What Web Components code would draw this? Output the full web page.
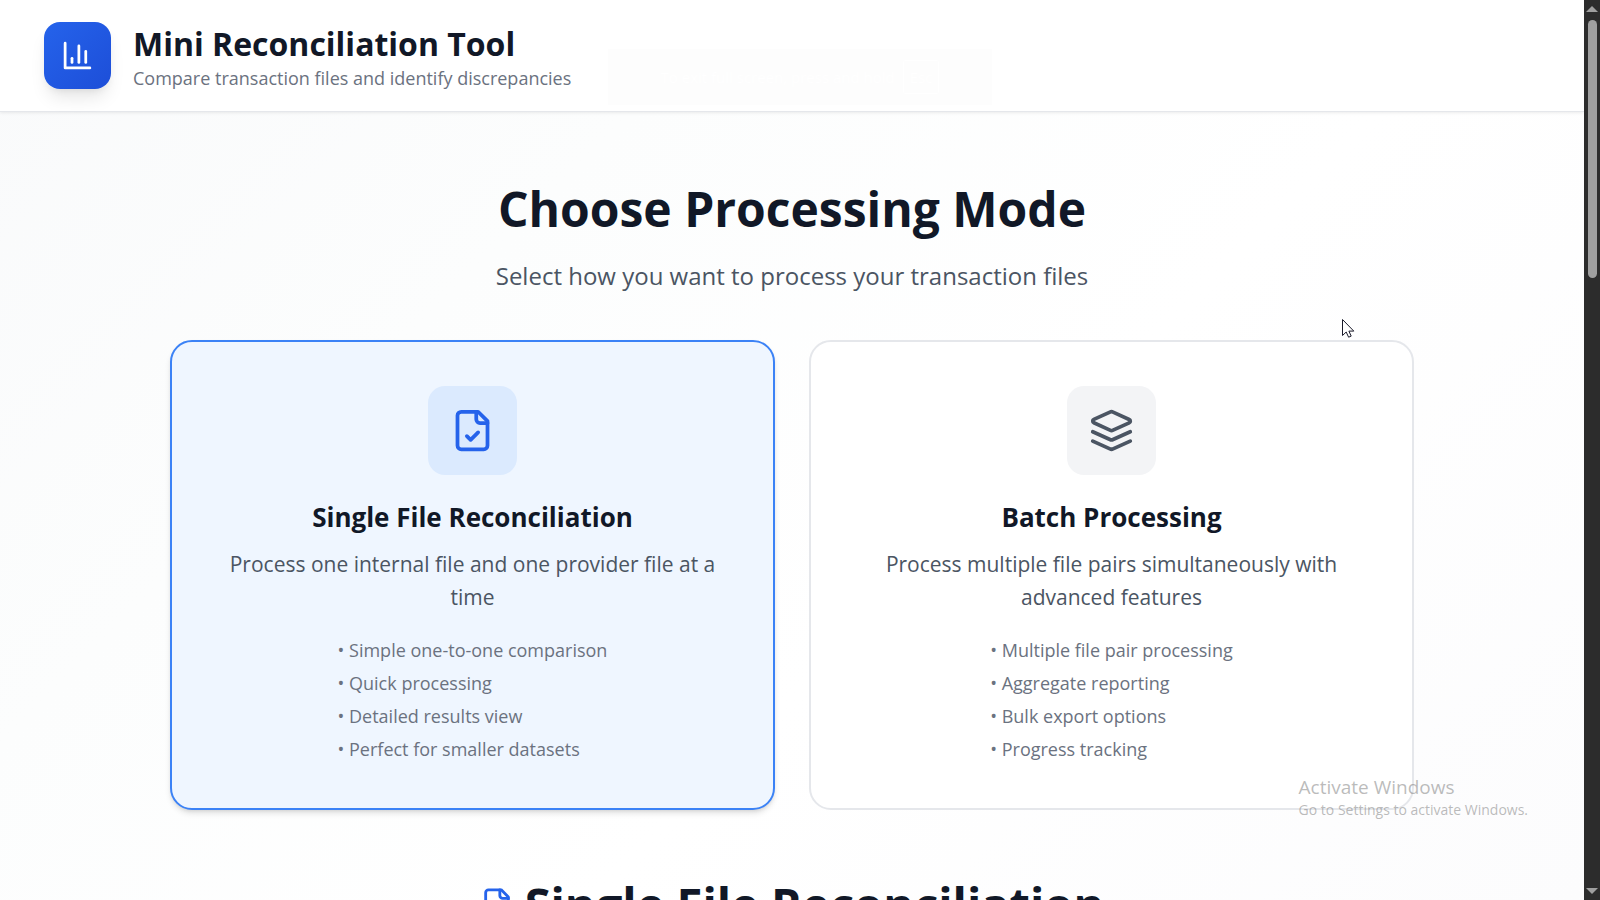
<!DOCTYPE html>
<html lang="en">
<head>
<meta charset="utf-8">
<meta name="viewport" content="width=device-width, initial-scale=1">
<title>Mini Reconciliation Tool</title>
<style>
  body { margin: 0; font-family: "Open Sans", "Noto Sans", sans-serif; color: #111827; }
</style>
</head>
<body>
<recon-window>
  <recon-header slot="header">
    <span slot="title">Mini Reconciliation Tool</span>
    <span slot="subtitle">Compare transaction files and identify discrepancies</span>
  </recon-header>
  <mode-picker>
    <span slot="title">Choose Processing Mode</span>
    <span slot="subtitle">Select how you want to process your transaction files</span>
    <mode-card icon="file" selected>
      <span slot="title">Single File Reconciliation</span>
      <span slot="text">Process one internal file and one provider file at a time</span>
      <span>• Simple one-to-one comparison</span>
      <span>• Quick processing</span>
      <span>• Detailed results view</span>
      <span>• Perfect for smaller datasets</span>
    </mode-card>
    <mode-card icon="layers">
      <span slot="title">Batch Processing</span>
      <span slot="text">Process multiple file pairs simultaneously with advanced features</span>
      <span>• Multiple file pair processing</span>
      <span>• Aggregate reporting</span>
      <span>• Bulk export options</span>
      <span>• Progress tracking</span>
    </mode-card>
  </mode-picker>
  <section-heading icon="file">Single File Reconciliation</section-heading>
  <screen-hint slot="overlay">To exit full screen, press and hold<span slot="key">Esc</span></screen-hint>
  <activation-note slot="overlay">
    <span slot="title">Activate Windows</span>
    Go to Settings to activate Windows.
  </activation-note>
  <pointer-arrow slot="overlay"></pointer-arrow>
</recon-window>

<script>
const ICONS = {
  chart: '<path d="M3 3v18h18"/><path d="M18 17V9"/><path d="M13 17V5"/><path d="M8 17v-3"/>',
  file: '<path d="M15 2H6a2 2 0 0 0-2 2v16a2 2 0 0 0 2 2h12a2 2 0 0 0 2-2V7Z"/><path d="M14 2v4a2 2 0 0 0 2 2h4"/><path d="m9 15 2 2 4-4"/>',
  layers: '<path d="m12.83 2.18a2 2 0 0 0-1.66 0L2.6 6.08a1 1 0 0 0 0 1.83l8.58 3.91a2 2 0 0 0 1.66 0l8.58-3.9a1 1 0 0 0 0-1.83Z"/><path d="m22 17.65-9.17 4.16a2 2 0 0 1-1.66 0L2 17.65"/><path d="m22 12.65-9.17 4.16a2 2 0 0 1-1.66 0L2 12.65"/>'
};

function define(name, render) {
  customElements.define(name, class extends HTMLElement {
    constructor() {
      super();
      this.attachShadow({ mode: 'open' });
    }
    connectedCallback() {
      this.shadowRoot.innerHTML = render(this);
    }
  });
}

define('line-icon', el => `
  <style>
    :host { display: block; flex: none; }
    svg { display: block; width: 100%; height: 100%; fill: none; stroke: currentColor;
      stroke-width: 2; stroke-linecap: round; stroke-linejoin: round; }
  </style>
  <svg viewBox="0 0 24 24" aria-hidden="true">${ICONS[el.getAttribute('name')]}</svg>`);

define('recon-window', () => `
  <style>
    :host { display: grid; grid-template-columns: minmax(0, 1fr) 16px; height: 100vh;
      position: relative; overflow: hidden; }
    .page { overflow-y: auto; scrollbar-width: none;
      background: linear-gradient(135deg, #f9fafb 0%, #fcfdfd 30%, #ffffff 60%, #fcfcfd 100%); }
    main { display: block; padding: 69px 44px 44px; }
  </style>
  <div class="page">
    <slot name="header"></slot>
    <main><slot></slot></main>
  </div>
  <scroll-track></scroll-track>
  <slot name="overlay"></slot>`);

define('scroll-track', () => `
  <style>
    :host { display: flex; flex-direction: column; align-items: center; background: #2c2c2c;
      box-sizing: border-box; padding: 6px 0; gap: 8px; }
    svg { display: block; width: 12px; height: 6px; fill: #9f9f9f; flex: none; }
    .rail { flex: 1; width: 9px; }
    .thumb { height: 30%; background: #9f9f9f; border-radius: 5px; }
  </style>
  <svg viewBox="0 0 12 6"><path d="M6 0l6 6H0z"/></svg>
  <div class="rail"><div class="thumb"></div></div>
  <svg viewBox="0 0 12 6"><path d="M0 0h12L6 6z"/></svg>`);

define('recon-header', () => `
  <style>
    :host { display: block; }
    header { display: flex; align-items: center; gap: 22px; padding: 20px 44px; background: #fff;
      border-bottom: 1px solid #e5e7eb; box-shadow: 0 1px 3px rgba(0,0,0,.08); }
    .logo { display: grid; place-items: center; width: 67px; height: 67px; flex: none;
      border-radius: 16px; color: #fff; background: linear-gradient(135deg, #2563eb, #1d4ed8);
      box-shadow: 0 12px 18px -4px rgba(0,0,0,.1), 0 4px 8px -4px rgba(0,0,0,.1); }
    line-icon { width: 33px; height: 33px; }
    .names { padding-top: 3px; }
    h1 { margin: 0; font-size: 32px; line-height: 42px; font-weight: 700; }
    p { margin: 0; font-size: 18px; line-height: 26px; color: #6b7280; }
  </style>
  <header>
    <div class="logo"><line-icon name="chart"></line-icon></div>
    <div class="names">
      <h1><slot name="title"></slot></h1>
      <p><slot name="subtitle"></slot></p>
    </div>
  </header>`);

define('mode-picker', () => `
  <style>
    :host { display: block; max-width: 1244px; margin: 0 auto; }
    h2 { margin: 0 0 19px; text-align: center; font-size: 48px; line-height: 56px; font-weight: 700; }
    p { margin: 0; text-align: center; font-size: 24px; line-height: 39px; color: #4b5563; }
    .cards { display: grid; grid-template-columns: repeat(2, minmax(0, 1fr)); gap: 34px; margin-top: 45px; }
  </style>
  <section>
    <h2><slot name="title"></slot></h2>
    <p><slot name="subtitle"></slot></p>
    <div class="cards"><slot></slot></div>
  </section>`);

define('mode-card', el => `
  <style>
    :host { display: grid; --line: #e5e7eb; --fill: #fff; --tile: #f3f4f6; --ink: #4b5563; }
    :host([selected]) { --line: #3b82f6; --fill: #eff6ff; --tile: #dbeafe; --ink: #2563eb; }
    button { display: flex; flex-direction: column; align-items: center; margin: 0; padding: 44px 44px 42px;
      border: 2px solid var(--line); border-radius: 22px; background: var(--fill);
      font: inherit; color: inherit; text-align: center; cursor: pointer; }
    :host([selected]) button { box-shadow: 0 4px 6px -1px rgba(0,0,0,.12), 0 2px 4px -2px rgba(0,0,0,.12); }
    .tile { display: grid; place-items: center; width: 89px; height: 89px; border-radius: 17px;
      background: var(--tile); color: var(--ink); }
    line-icon { width: 45px; height: 45px; }
    .title { margin-top: 23px; font-size: 26px; line-height: 39px; font-weight: 700; }
    .text { margin-top: 11px; font-size: 21px; line-height: 33px; color: #4b5563; }
    .list { display: flex; flex-direction: column; margin-top: 20px; text-align: left;
      font-size: 18px; line-height: 33px; color: #6b7280; }
  </style>
  <button type="button" aria-pressed="${el.hasAttribute('selected')}">
    <span class="tile"><line-icon name="${el.getAttribute('icon')}"></line-icon></span>
    <span class="title"><slot name="title"></slot></span>
    <span class="text"><slot name="text"></slot></span>
    <span class="list"><slot></slot></span>
  </button>`);

define('section-heading', el => `
  <style>
    :host { display: block; margin-top: 66px; }
    h2 { display: flex; align-items: center; justify-content: center; gap: 11px; margin: 0;
      font-size: 47px; line-height: 56px; font-weight: 700; }
    line-icon { width: 34px; height: 34px; color: #2563eb; }
  </style>
  <h2><line-icon name="${el.getAttribute('icon')}"></line-icon><span><slot></slot></span></h2>`);

define('screen-hint', () => `
  <style>
    :host { position: absolute; top: 49px; left: 50%; transform: translateX(-50%);
      display: flex; align-items: center; justify-content: center; gap: 8px;
      box-sizing: border-box; width: 384px; height: 56px; background: #fdfdfd; color: #fff;
      font-size: 15px; white-space: nowrap; pointer-events: none; }
    kbd { padding: 6px; border: 1px solid #fff; border-radius: 2px; font: inherit; }
  </style>
  <span><slot></slot></span><kbd><slot name="key"></slot></kbd>`);

define('activation-note', () => `
  <style>
    :host { position: absolute; right: 72px; bottom: 80px; font-size: 14px; line-height: 20px;
      color: rgba(120,120,120,.5); pointer-events: none; }
    .title { font-size: 19px; line-height: 26px; }
  </style>
  <div class="title"><slot name="title"></slot></div>
  <div><slot></slot></div>`);

define('pointer-arrow', () => `
  <style>
    :host { position: absolute; top: 318px; left: 1341px; pointer-events: none; }
    svg { display: block; width: 14px; height: 21px; }
  </style>
  <svg viewBox="0 0 14 21" aria-hidden="true"><path d="M1.5 1.5v16l3.7-3.5 2.4 5.2 2.6-1.1-2.3-5h4.9z" fill="#fff" stroke="#1b1b2b" stroke-width="1"/></svg>`);
</script>
</body>
</html>
